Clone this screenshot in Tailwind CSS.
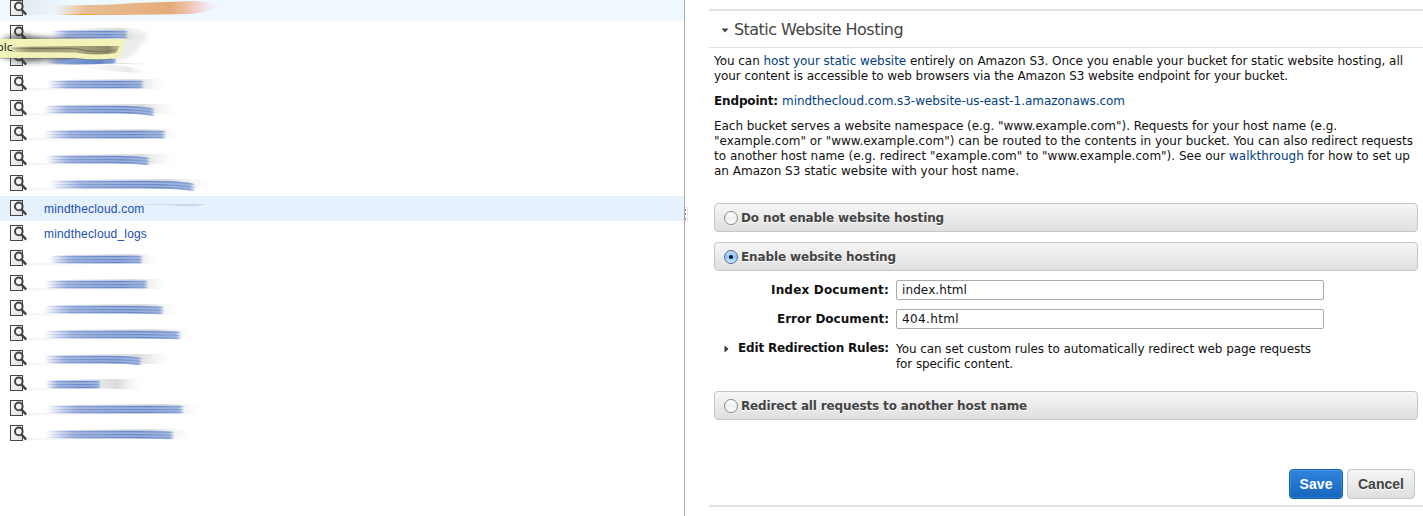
<!DOCTYPE html>
<html lang="en">
<head>
<meta charset="utf-8">
<title>Static Website Hosting</title>
<script src="https://cdn.jsdelivr.net/npm/@tailwindcss/browser@4"></script>
</head>
<body class="bg-white">
<svg width="0" height="0" class="absolute" aria-hidden="true">
  <defs>
    <linearGradient id="blue"><stop offset="0" stop-color="#b4bde2" stop-opacity="0"/><stop offset=".22" stop-color="#a9b7df"/><stop offset=".5" stop-color="#9cb1dc"/><stop offset=".97" stop-color="#9fb3dc"/><stop offset="1" stop-color="#a3b7e0" stop-opacity=".2"/></linearGradient>
    <linearGradient id="line"><stop offset="0" stop-color="#7d9ad4" stop-opacity="0"/><stop offset=".3" stop-color="#7f9bd2"/><stop offset=".75" stop-color="#6487c6"/><stop offset="1" stop-color="#7896cf" stop-opacity=".5"/></linearGradient>
    <linearGradient id="grey"><stop offset="0" stop-color="#bbb" stop-opacity="0"/><stop offset=".7" stop-color="#b8b8b8" stop-opacity=".5"/><stop offset="1" stop-color="#e4e4e4" stop-opacity="0"/></linearGradient>
    <linearGradient id="orange"><stop offset="0" stop-color="#e9b88a" stop-opacity="0"/><stop offset=".2" stop-color="#e8bd94"/><stop offset=".7" stop-color="#e5ab79"/><stop offset=".8" stop-color="#eebfa6"/><stop offset=".87" stop-color="#f2d4d4"/><stop offset="1" stop-color="#f3e3ea" stop-opacity="0"/></linearGradient>
    <linearGradient id="gold"><stop offset="0" stop-color="#e8a23c" stop-opacity="0"/><stop offset=".3" stop-color="#e8a030"/><stop offset="1" stop-color="#e6b074" stop-opacity="0"/></linearGradient>
    <linearGradient id="wash"><stop offset="0" stop-color="#777" stop-opacity=".35"/><stop offset="1" stop-color="#999" stop-opacity="0"/></linearGradient>
    <linearGradient id="olive"><stop offset="0" stop-color="#77755a" stop-opacity="0"/><stop offset=".2" stop-color="#9d9b78"/><stop offset=".6" stop-color="#aaa780"/><stop offset=".9" stop-color="#8d8768"/><stop offset="1" stop-color="#8d8768" stop-opacity=".4"/></linearGradient>
    <linearGradient id="vein"><stop offset="0" stop-color="#66644e" stop-opacity=".2"/><stop offset=".3" stop-color="#6f6d54"/><stop offset="1" stop-color="#77704f" stop-opacity=".5"/></linearGradient>
    <linearGradient id="shade"><stop offset="0" stop-color="#333" stop-opacity=".3"/><stop offset=".25" stop-color="#333" stop-opacity=".65"/><stop offset=".75" stop-color="#555" stop-opacity=".4"/><stop offset="1" stop-color="#777" stop-opacity="0"/></linearGradient>
    <linearGradient id="page" x2="1" y2="1"><stop offset="0" stop-color="#fff"/><stop offset="1" stop-color="#dedede"/></linearGradient>
    <filter id="soft" x="-10%" y="-60%" width="120%" height="220%"><feGaussianBlur stdDeviation=".7"/></filter>
    <filter id="fine" x="-10%" y="-60%" width="120%" height="220%"><feGaussianBlur stdDeviation=".9 .45"/></filter>
    <filter id="softer" x="-20%" y="-100%" width="140%" height="300%"><feGaussianBlur stdDeviation="2"/></filter>
    <symbol id="lens" viewBox="0 0 18 16"><rect x=".5" y=".5" width="12" height="15" fill="url(#page)" stroke="#444"/><circle cx="8.8" cy="6.4" r="3.8" fill="#f4f4f4" stroke="#444" stroke-width="2"/><path d="M11.4 9.4l4.8 5.2" stroke="#444" stroke-width="2.4" fill="none"/></symbol>
  </defs>
</svg>
<div class="flex h-[516px] w-[1423px] overflow-hidden bg-white">
  <section class="relative h-[516px] w-[684px] shrink-0 overflow-hidden">
    <ul id="buckets" class="-mt-1"></ul>
    <svg class="absolute left-0 top-7" width="210" height="50" aria-hidden="true">
      <path d="M124 5Q160 -2 140 18Q134 30 116 34Z" fill="#999" opacity=".18" filter="url(#softer)"/>
      <path d="M0 12Q12 2 34 8L118 12 Q98 35 50 33Q15 37 0 29Z" fill="url(#shade)" filter="url(#softer)"/>
      <path d="M80 36Q125 34 152 46Q120 44 80 40Z" fill="url(#grey)" opacity=".6" filter="url(#soft)"/>
      <path d="M46 34L74 31H116L113 35.5Q80 37 46 36Z" fill="url(#line)" filter="url(#soft)"/>
      <path d="M0 11H126Q123 20 119 30Q95 33 75 30H0Z" fill="#f1f3b8"/>
      <path d="M8 19L80 18L120 18L116 25Q95 28 75 24.5L8 24Z" fill="url(#olive)" filter="url(#soft)"/>
      <path d="M12 20.5H75Q95 26 116 22" stroke="url(#vein)" stroke-width="1.3" fill="none" filter="url(#fine)"/>
      <path d="M0 30.3H75Q95 33 112 31" stroke="#555" stroke-opacity=".35" fill="none"/>
    </svg>
    <span class="absolute left-[-3px] top-[42px] font-['DejaVu_Sans'] text-[11px] leading-3 text-[#222]">olc</span>
  </section>

  <main class="relative h-[516px] flex-1 border-l border-[#aaa] pl-6 font-['DejaVu_Sans',sans-serif] text-xs leading-[15px] text-[#111]">
    <div class="absolute left-0 top-[207px] flex h-[15px] w-[3px] flex-col items-start justify-around border-y border-r border-[#e8e8e8] bg-white">
      <i class="h-0.5 w-px bg-[#888]"></i><i class="h-0.5 w-px bg-[#888]"></i><i class="h-0.5 w-px bg-[#888]"></i>
    </div>
    <div class="mt-[9px] h-[39px] border-t-2 border-b border-t-[#e2e2e2] border-b-[#e2e2e2]">
      <h2 class="flex h-[38px] items-center pl-3 text-base text-[#444]">
        <svg class="mr-[5px]" width="8" height="5"><path d="M.5.5h7L4 4.5z" fill="#444"/></svg>
        <span class="ln whitespace-nowrap" data-w="169">Static Website Hosting</span>
      </h2>
    </div>
    <div class="pl-[5px] pt-1.5 whitespace-nowrap">
      <p><span class="ln" data-w="689">You can <a class="text-[#004080]">host your static website</a> entirely on Amazon S3. Once you enable your bucket for static website hosting, all</span><br><span class="ln" data-w="574">your content is accessible to web browsers via the Amazon S3 website endpoint for your bucket.</span></p>
      <p class="mt-2.5"><b class="ln" data-w="64">Endpoint:</b><a class="ln ml-1 text-[#004080]" data-w="343">mindthecloud.com.s3-website-us-east-1.amazonaws.com</a></p>
      <p class="mt-2.5"><span class="ln" data-w="623">Each bucket serves a website namespace (e.g. "www.example.com"). Requests for your host name (e.g.</span><br><span class="ln" data-w="699">"example.com" or "www.example.com") can be routed to the contents in your bucket. You can also redirect requests</span><br><span class="ln" data-w="696">to another host name (e.g. redirect "example.com" to "www.example.com"). See our <a class="text-[#004080]">walkthrough</a> for how to set up</span><br><span class="ln" data-w="305">an Amazon S3 static website with your host name.</span></p>

      <label class="mt-6 flex h-[29px] w-[704px] items-center rounded border border-[#c6c6c6] bg-linear-to-b from-[#f6f6f6] to-[#dfdfdf] pl-[9px] font-bold text-[#444] [text-shadow:0_1px_#fff]">
        <i class="mr-[3px] size-3.5 rounded-full border border-[#888] bg-linear-to-b from-white via-[#f0f0f0] to-white"></i><span class="ln pt-px" data-w="203">Do not enable website hosting</span>
      </label>
      <label class="mt-2.5 flex h-[29px] w-[704px] items-center rounded border border-[#c6c6c6] bg-linear-to-b from-[#f6f6f6] to-[#dfdfdf] pl-[9px] font-bold text-[#444] [text-shadow:0_1px_#fff]">
        <i class="mr-[3px] flex size-3.5 items-center justify-center rounded-full border border-[#53699b] bg-linear-to-b from-[#c9ddf4] via-[#8dc3f5] to-[#c8f1ff]"><i class="size-1 rounded-full bg-[#07162c]"></i></i><span class="ln pt-px" data-w="155">Enable website hosting</span>
      </label>
      <div class="mt-[9px] flex items-center">
        <b class="flex w-[175px] justify-end"><span class="ln" data-w="118">Index Document:</span></b>
        <div class="ml-[7px] flex h-5 w-[428px] items-center rounded-xs border border-[#aaa] pl-[5px]"><span class="ln" data-w="65">index.html</span></div>
      </div>
      <div class="mt-[9px] flex items-center">
        <b class="flex w-[175px] justify-end"><span class="ln" data-w="112">Error Document:</span></b>
        <div class="ml-[7px] flex h-5 w-[428px] items-center rounded-xs border border-[#aaa] pl-[5px]"><span class="ln" data-w="57">404.html</span></div>
      </div>
      <div class="mt-3 flex items-start">
        <b class="flex w-[175px] items-center justify-between pl-2.5"><svg width="5" height="8"><path d="M.5.5v7L4.5 4z" fill="#333"/></svg><span class="ln" data-w="151">Edit Redirection Rules:</span></b>
        <p class="ml-[7px] pt-px"><span class="ln" data-w="415">You can set custom rules to automatically redirect web page requests</span><br><span class="ln" data-w="117">for specific content.</span></p>
      </div>
      <label class="mt-[19px] flex h-[29px] w-[704px] items-center rounded border border-[#c6c6c6] bg-linear-to-b from-[#f6f6f6] to-[#dfdfdf] pl-[9px] font-bold text-[#444] [text-shadow:0_1px_#fff]">
        <i class="mr-[3px] size-3.5 rounded-full border border-[#888] bg-linear-to-b from-white via-[#f0f0f0] to-white"></i><span class="ln pt-px" data-w="286">Redirect all requests to another host name</span>
      </label>
    </div>
    <div class="mt-[49px] flex h-[38px] items-start justify-end gap-1 border-b-2 border-[#e2e2e2] pr-2 font-['Liberation_Sans',sans-serif] text-sm font-bold">
      <button class="flex h-[30px] w-[54px] items-center justify-center rounded border border-[#1160b4] bg-linear-to-b from-[#2f86dc] to-[#1465bd] text-white shadow-[inset_0_0_0_1px_#ffffff22]"><span class="ln" data-w="33">Save</span></button>
      <button class="flex h-[30px] w-[68px] items-center justify-center rounded border border-[#c6c6c6] bg-linear-to-b from-[#f6f6f6] to-[#dfdfdf] text-[#444] [text-shadow:0_1px_#fff]"><span class="ln" data-w="46">Cancel</span></button>
    </div>
  </main>
</div>
<script>
// Each hidden name: [start x, end x, end drop, tail end x, tail top]
const names = [
  'first', [52,127,0,142,7], [46,116,0,150,17], [48,143,0,166,8], [44,154,3,177,8], [44,165,0,180,8], [46,149,2,175,8], [50,194,3,212,8],
  'mindthecloud.com', 'mindthecloud_logs',
  [50,142,0,158,8], [45,147,0,168,8], [44,163,1,180,8], [44,180,1,192,8], [44,141,2,172,8], [46,100,0,142,8], [46,183,0,203,8], [46,173,1,192,8]
];
const streak = ([a, b, d, t, g]) => {
  const m = a + (b - a) * .65;
  const band = (y, h, f) => `<path d="M${a} ${y}H${m}Q${b - 12} ${y} ${b} ${y + d}V${y + d + h}Q${b - 12} ${y + h} ${m} ${y + h}H${a}Z" fill="${f}"/>`;
  return `<path d="M${a + 15} ${g}H${t - 10}L${t} ${g + 2}V19L${b - 12} 17L${a + 30} 18Z" fill="url(#grey)" filter="url(#soft)"/>
    <path d="M28 17H${b}Q${b - 30} 19.5 28 19.5Z" fill="url(#wash)" opacity=".2"/><g filter="url(#fine)">`
    + band(9.6, 7.8, 'url(#blue)') + band(10, 1.3, 'url(#line)') + band(13, 1.2, 'url(#line)') + band(15.8, 1.1, 'url(#line)') + '</g>';
};
const first = `<path d="M20 4H70V19H20Z" fill="url(#wash)" opacity=".3" filter="url(#soft)"/>
  <path d="M54 9Q100 10 135 7L195 5Q222 7 219 12Q205 17 190 18L120 19H56Z" fill="url(#orange)" filter="url(#soft)"/>
  <path d="M60 18H130V19H60Z" fill="url(#gold)"/>`;
const smear = `<path d="M125 8H205Q195 12 170 9Z" fill="#8a98a6" opacity=".28" filter="url(#soft)"/>`;
document.getElementById('buckets').innerHTML = names.map((n, i) => {
  const text = typeof n === 'string' && n !== 'first';
  const bg = i === 0 ? 'bg-[#eff7ff]' : i === 8 ? 'bg-[#e5f1fd]' : '';
  const art = n === 'first' ? first : text ? (i === 8 ? smear : '') : streak(n);
  return `<li class="relative flex h-[25px] items-start ${bg}">
    <svg class="absolute left-0 top-0" width="230" height="25">${art}</svg>
    <svg class="relative ml-2.5 mt-1 shrink-0" width="18" height="16"><use href="#lens"/></svg>
    ${text ? `<span class="ln relative ml-4 pt-px font-['Liberation_Sans',sans-serif] text-xs leading-[25px] text-[#1a4fae]" data-w="${i === 8 ? 100.5 : 103}">${n}</span>` : ''}
  </li>`;
}).join('');
// Track each line of text to its measure
const fit = () => document.querySelectorAll('.ln').forEach(e => {
  e.style.letterSpacing = '0px';
  const w = e.getBoundingClientRect().width;
  e.style.letterSpacing = (e.dataset.w - w) / e.textContent.length + 'px';
});
fit();
addEventListener('load', () => { fit(); requestAnimationFrame(fit); setTimeout(fit, 60); });
document.fonts.ready.then(fit);
</script>
</body>
</html>
